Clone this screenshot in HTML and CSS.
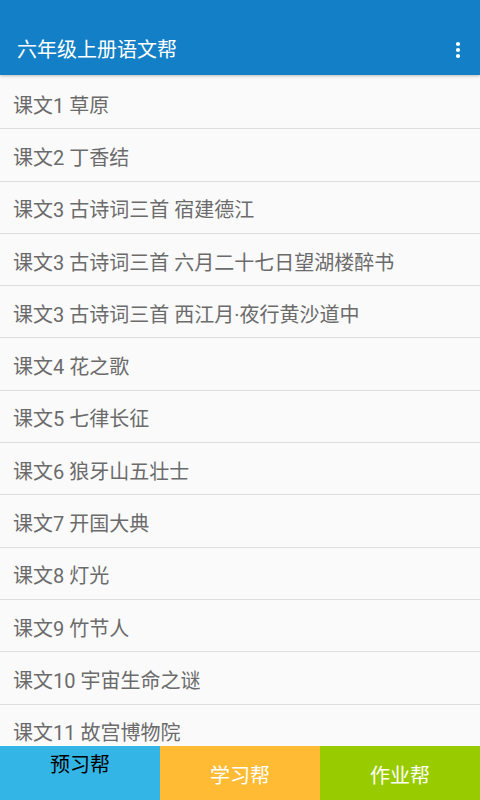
FILE: index.html
```html
<!DOCTYPE html>
<html lang="zh">
<head>
<meta charset="utf-8">
<title>六年级上册语文帮</title>
<link rel="stylesheet" href="styles.css">
</head>
<body>
<div class="app">
  <header class="bar">
    <h1 class="title">六年级上册语文帮</h1>
    <svg class="more" width="6" height="18" viewBox="0 0 6 18"><circle cx="3" cy="3" r="2.1" fill="#fff"/><circle cx="3" cy="9" r="2.1" fill="#fff"/><circle cx="3" cy="15" r="2.1" fill="#fff"/></svg>
  </header>
  <ul class="list">
    <li class="row">课文1 草原</li>
    <li class="row">课文2 丁香结</li>
    <li class="row">课文3 古诗词三首 宿建德江</li>
    <li class="row">课文3 古诗词三首 六月二十七日望湖楼醉书</li>
    <li class="row">课文3 古诗词三首 西江月·夜行黄沙道中</li>
    <li class="row">课文4 花之歌</li>
    <li class="row">课文5 七律长征</li>
    <li class="row">课文6 狼牙山五壮士</li>
    <li class="row">课文7 开国大典</li>
    <li class="row">课文8 灯光</li>
    <li class="row">课文9 竹节人</li>
    <li class="row">课文10 宇宙生命之谜</li>
    <li class="row">课文11 故宫博物院</li>
  </ul>
  <nav class="tabs">
    <div class="tab tab-blue">预习帮</div>
    <div class="tab tab-orange">学习帮</div>
    <div class="tab tab-green">作业帮</div>
  </nav>
</div>
</body>
</html>
```
FILE: styles.css
```css
* { box-sizing: border-box; }
html, body { margin: 0; padding: 0; }
body {
  width: 480px;
  height: 800px;
  overflow: hidden;
  background: #fafafa;
  font-family: "Roboto", "Noto Sans CJK SC", sans-serif;
}
.app {
  display: flex;
  flex-direction: column;
  height: 800px;
}
.bar {
  flex: 0 0 75px;
  background: #137fc6;
  display: flex;
  align-items: center;
  justify-content: space-between;
  padding: 24px 19px 0 17px;
  position: relative;
  z-index: 2;
  box-shadow: 0 1px 3px rgba(0,0,0,0.25);
}
.title {
  margin: 0;
  font-weight: normal;
  font-size: 20px;
  color: #fff;
  line-height: 26px;
}
.more { display: block; margin-top: 1px; }
.list {
  flex: 1 1 auto;
  min-height: 0;
  overflow: hidden;
  margin: 0;
  padding: 2px 0 0;
  list-style: none;
}
.row {
  height: 52.3px;
  border-bottom: 1px solid #dedede;
  padding: 3px 13px 0;
  display: flex;
  align-items: center;
  font-size: 20px;
  color: #6b6b6b;
  white-space: nowrap;
}
.tabs {
  flex: 0 0 54px;
  display: flex;
}
.tab {
  flex: 1 1 0;
  display: flex;
  justify-content: center;
  font-size: 20px;
  color: #fff;
  align-items: center;
  padding-top: 2px;
}
.tab-blue {
  background: #33b5e5;
  color: #000;
  align-items: flex-start;
  padding-top: 3px;
}
.tab-orange { background: #ffbb33; }
.tab-green { background: #99cc00; }
```
